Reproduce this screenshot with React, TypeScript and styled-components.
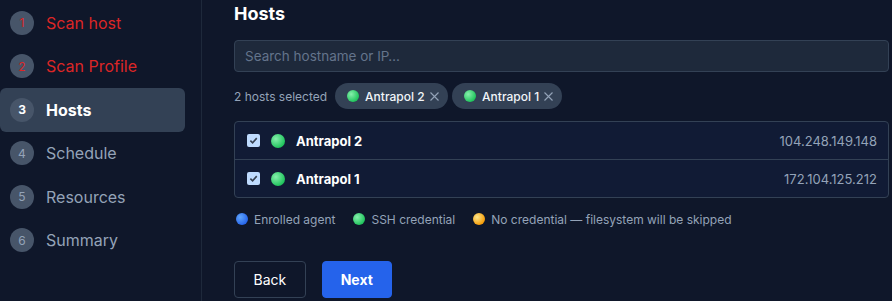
import React from "react";
import styled, { createGlobalStyle } from "styled-components";

const Global = createGlobalStyle`
  html, body { margin: 0; padding: 0; background: #0f172a; }
  body { font-family: Inter, "Noto Sans", "Liberation Sans", sans-serif; color: #e2e8f0; }
  * { box-sizing: border-box; }
`;

const Page = styled.div`
  display: flex;
  width: 892px;
  height: 301px;
  overflow: hidden;
  background: #0f172a;
`;

const Sidebar = styled.nav`
  width: 202px;
  flex: none;
  border-right: 1px solid #1e293b;
  padding: 1px 16px 0 0;
  display: flex;
  flex-direction: column;
`;

const Step = styled.div<{ $active?: boolean }>`
  height: 43.5px;
  display: flex;
  align-items: center;
  gap: 12px;
  padding-left: 10px;
  border-radius: 6px;
  background: ${(p) => (p.$active ? "#334155" : "transparent")};
`;

const StepNum = styled.span<{ $tone: "error" | "active" | "idle" }>`
  width: 24px;
  height: 24px;
  border-radius: 50%;
  background: #475569;
  display: flex;
  align-items: center;
  justify-content: center;
  font-size: 12px;
  font-weight: ${(p) => (p.$tone === "active" ? 700 : 400)};
  color: ${(p) => (p.$tone === "error" ? "#dc2626" : p.$tone === "active" ? "#ffffff" : "#94a3b8")};
`;

const StepLabel = styled.span<{ $tone: "error" | "active" | "idle" }>`
  font-size: 16px;
  font-weight: ${(p) => (p.$tone === "active" ? 700 : 400)};
  color: ${(p) => (p.$tone === "error" ? "#dc2626" : p.$tone === "active" ? "#ffffff" : "#94a3b8")};
`;

const Main = styled.main`
  flex: 1;
  padding: 0 3px 0 32px;
  display: flex;
  flex-direction: column;
`;

const Title = styled.h2`
  margin: 0;
  font-size: 18px;
  line-height: 28px;
  font-weight: 700;
  color: #ffffff;
`;

const Search = styled.input`
  margin-top: 12px;
  height: 32px;
  width: 100%;
  background: #1e293b;
  border: 1px solid #334155;
  border-radius: 4px;
  padding: 0 10px;
  font-family: inherit;
  font-size: 13.5px;
  color: #e2e8f0;
  outline: none;
  &::placeholder { color: #64748b; }
`;

const SelectedRow = styled.div`
  margin-top: 11px;
  display: flex;
  align-items: center;
  gap: 4.5px;
  height: 26px;
`;

const Muted = styled.span`
  font-size: 12px;
  color: #94a3b8;
  margin-right: 3.5px;
`;

const Chip = styled.span`
  height: 26px;
  display: inline-flex;
  align-items: center;
  gap: 6px;
  padding: 0 9px 0 12px;
  border-radius: 999px;
  background: #334155;
  font-size: 12px;
  font-weight: 500;
  color: #f1f5f9;
`;

const ChipX = styled.span`
  display: flex;
  margin-left: -1px;
`;

const Dot = styled.span<{ $c: "green" | "blue" | "yellow"; $size?: number }>`
  width: ${(p) => p.$size ?? 12}px;
  height: ${(p) => p.$size ?? 12}px;
  border-radius: 50%;
  flex: none;
  background: ${(p) =>
    p.$c === "green"
      ? "radial-gradient(circle at 35% 35%, #86efac, #22c55e 70%, #16a34a)"
      : p.$c === "blue"
      ? "radial-gradient(circle at 35% 35%, #60a5fa, #2563eb 75%, #1d4ed8)"
      : "radial-gradient(circle at 35% 35%, #fde68a, #f59e0b 70%, #d97706)"};
`;

const Table = styled.div`
  margin-top: 12px;
  border: 1px solid #334155;
  border-radius: 4px;
  background: #111b35;
  overflow: hidden;
`;

const Row = styled.div<{ $first?: boolean }>`
  height: ${(p) => (p.$first ? 37 : 38)}px;
  display: flex;
  align-items: center;
  padding: 0 11px 0 12px;
  border-top: ${(p) => (p.$first ? "none" : "1px solid #334155")};
`;

const Check = styled.span`
  width: 13px;
  height: 13px;
  border-radius: 2px;
  background: #bfdbfe;
  display: flex;
  align-items: center;
  justify-content: center;
  margin-right: 11px;
`;

const HostName = styled.span`
  margin-left: 11px;
  font-size: 13px;
  font-weight: 700;
  color: #ffffff;
  flex: 1;
`;

const Ip = styled.span`
  font-size: 13px;
  color: #94a3b8;
`;

const Legend = styled.div`
  margin-top: 11px;
  display: flex;
  align-items: center;
  height: 20px;
  padding-left: 2px;
  gap: 18px;
`;

const LegendItem = styled.span`
  display: inline-flex;
  align-items: center;
  gap: 6px;
  font-size: 12px;
  color: #94a3b8;
`;

const Buttons = styled.div`
  margin-top: 32px;
  display: flex;
  gap: 16px;
`;

const Button = styled.button<{ $primary?: boolean }>`
  height: 37px;
  padding: 0 ${(p) => (p.$primary ? 18 : 18.5)}px;
  border-radius: 4px;
  font-family: inherit;
  font-size: 14px;
  font-weight: ${(p) => (p.$primary ? 700 : 400)};
  color: #ffffff;
  background: ${(p) => (p.$primary ? "#2563eb" : "transparent")};
  border: 1px solid ${(p) => (p.$primary ? "#2563eb" : "#334155")};
`;

const CheckMark = () => (
  <svg width="9" height="9" viewBox="0 0 10 10">
    <path d="M1.5 5.2 L4 7.6 L8.6 2.4" fill="none" stroke="#374151" strokeWidth="1.8" />
  </svg>
);

const XIcon = () => (
  <svg width="9" height="9" viewBox="0 0 9 9">
    <path d="M0.5 0.5 L8.5 8.5 M8.5 0.5 L0.5 8.5" stroke="#94a3b8" strokeWidth="1.1" />
  </svg>
);

const steps: { n: number; label: string; tone: "error" | "active" | "idle" }[] = [
  { n: 1, label: "Scan host", tone: "error" },
  { n: 2, label: "Scan Profile", tone: "error" },
  { n: 3, label: "Hosts", tone: "active" },
  { n: 4, label: "Schedule", tone: "idle" },
  { n: 5, label: "Resources", tone: "idle" },
  { n: 6, label: "Summary", tone: "idle" },
];

const hosts = [
  { name: "Antrapol 2", ip: "104.248.149.148" },
  { name: "Antrapol 1", ip: "172.104.125.212" },
];

export default function App() {
  return (
    <>
      <Global />
      <Page>
        <Sidebar>
          {steps.map((s) => (
            <Step key={s.n} $active={s.tone === "active"}>
              <StepNum $tone={s.tone}>{s.n}</StepNum>
              <StepLabel $tone={s.tone}>{s.label}</StepLabel>
            </Step>
          ))}
        </Sidebar>
        <Main>
          <Title>Hosts</Title>
          <Search placeholder="Search hostname or IP…" />
          <SelectedRow>
            <Muted>2 hosts selected</Muted>
            {hosts.map((h) => (
              <Chip key={h.name}>
                <Dot $c="green" />
                {h.name}
                <ChipX>
                  <XIcon />
                </ChipX>
              </Chip>
            ))}
          </SelectedRow>
          <Table>
            {hosts.map((h, i) => (
              <Row key={h.name} $first={i === 0}>
                <Check>
                  <CheckMark />
                </Check>
                <Dot $c="green" $size={14} />
                <HostName>{h.name}</HostName>
                <Ip>{h.ip}</Ip>
              </Row>
            ))}
          </Table>
          <Legend>
            <LegendItem>
              <Dot $c="blue" />
              Enrolled agent
            </LegendItem>
            <LegendItem>
              <Dot $c="green" />
              SSH credential
            </LegendItem>
            <LegendItem>
              <Dot $c="yellow" />
              No credential — filesystem will be skipped
            </LegendItem>
          </Legend>
          <Buttons>
            <Button>Back</Button>
            <Button $primary>Next</Button>
          </Buttons>
        </Main>
      </Page>
    </>
  );
}
